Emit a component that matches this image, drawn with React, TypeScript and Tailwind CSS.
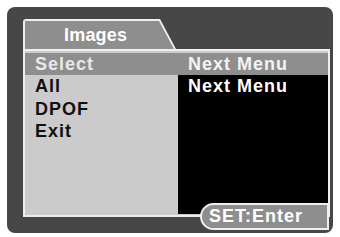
import React from 'react';

const ITEMS = ['All', 'DPOF', 'Exit'];

const App: React.FC = () => {
  return (
    <div className="w-[340px] h-[237px] bg-white p-[7px] font-['Liberation_Sans',Arial,sans-serif] font-bold">
      {/* Camera OSD frame */}
      <div className="relative w-[326px] h-[226px] rounded-[8px] bg-[#474747] pt-[12px] pl-[16px] pr-[3px]">
        {/* Tab */}
        <div className="w-[153px] h-[30px] bg-[#efefef] pl-[2px] pt-[2px] rounded-tl-[3px] [clip-path:polygon(0_0,137px_0,153px_100%,0_100%)]">
          <div className="h-[28px] bg-[#8e8e8e] pl-[39px] text-[18px] leading-[28px] text-white tracking-[0.2px] [clip-path:polygon(0_0,134px_0,149px_100%,0_100%)]">
            Images
          </div>
        </div>

        {/* Menu panel */}
        <div className="w-[307px] h-[168px] border-2 border-[#efefef] bg-[#cbcbcb] pt-[2px] flex flex-col text-[18px] tracking-[1px]">
          <div className="flex h-[22.4px] leading-[22.4px] bg-[#8e8e8e] text-[#e8e8e8]">
            <span className="w-[153px] pl-[10px]">Select</span>
            <span className="flex-1 pl-[10px] text-[#f4f4f4]">Next Menu</span>
          </div>
          <div className="flex flex-1">
            <div className="w-[153px] pl-[10px] flex flex-col text-[#111]">
              {ITEMS.map((item) => (
                <span key={item} className="h-[22.4px] leading-[22.4px]">
                  {item}
                </span>
              ))}
            </div>
            <div className="flex-1 bg-black pl-[10px] mb-[1px]">
              <span className="block h-[22.4px] leading-[22.4px] text-white">Next Menu</span>
            </div>
          </div>
        </div>

        {/* SET:Enter badge */}
        <div className="absolute left-[193px] top-[196px] w-[129px] h-[27px] border-2 border-[#efefef] rounded-l-full bg-[#8e8e8e] pl-[7px] text-[18px] leading-[23px] text-white tracking-[1px]">
          SET:Enter
        </div>
      </div>
    </div>
  );
};

export default App;
